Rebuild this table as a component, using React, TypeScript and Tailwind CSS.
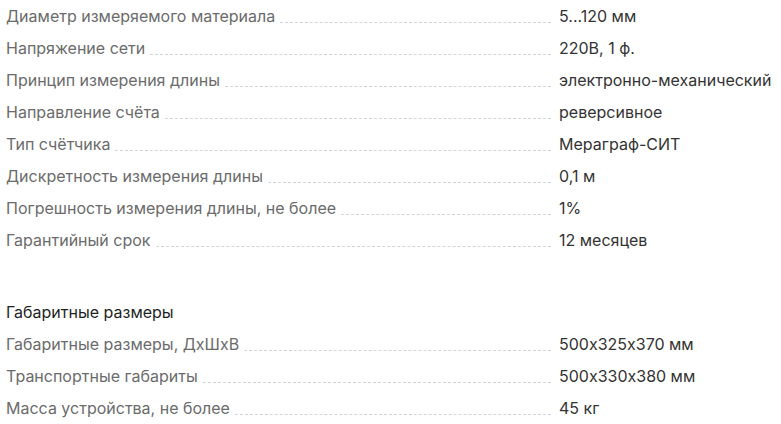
const main = [
  ['Диаметр измеряемого материала', '5...120 мм'],
  ['Напряжение сети', '220В, 1 ф.'],
  ['Принцип измерения длины', 'электронно-механический'],
  ['Направление счёта', 'реверсивное'],
  ['Тип счётчика', 'Мераграф-СИТ'],
  ['Дискретность измерения длины', '0,1 м'],
  ['Погрешность измерения длины, не более', '1%'],
  ['Гарантийный срок', '12 месяцев'],
];

const sizes = [
  ['Габаритные размеры, ДхШхВ', '500x325x370 мм'],
  ['Транспортные габариты', '500x330x380 мм'],
  ['Масса устройства, не более', '45 кг'],
];

function Row({ label, value }: { label: string; value: string }) {
  return (
    <div className="flex h-8 items-center">
      <span className="whitespace-nowrap pl-[6px] text-[#6b6b6b]">{label}</span>
      <span className="ml-[5px] mr-[8px] mt-[12px] flex-1 border-b border-dashed border-[#d1d5db]" />
      <span className="w-[222px] shrink-0 whitespace-nowrap text-[#333]">{value}</span>
    </div>
  );
}

export default function App() {
  return (
    <div
      className="w-[781px] h-[424px] overflow-hidden bg-white text-[16px] [font-feature-settings:'calt'_0]"
      style={{ fontFamily: 'Inter, "Noto Sans", sans-serif' }}
    >
      {main.map(([l, v]) => (
        <Row key={l} label={l} value={v} />
      ))}
      <div className="mt-10 flex h-8 items-center pl-[6px] text-[#1f1f1f]">Габаритные размеры</div>
      {sizes.map(([l, v]) => (
        <Row key={l} label={l} value={v} />
      ))}
    </div>
  );
}
